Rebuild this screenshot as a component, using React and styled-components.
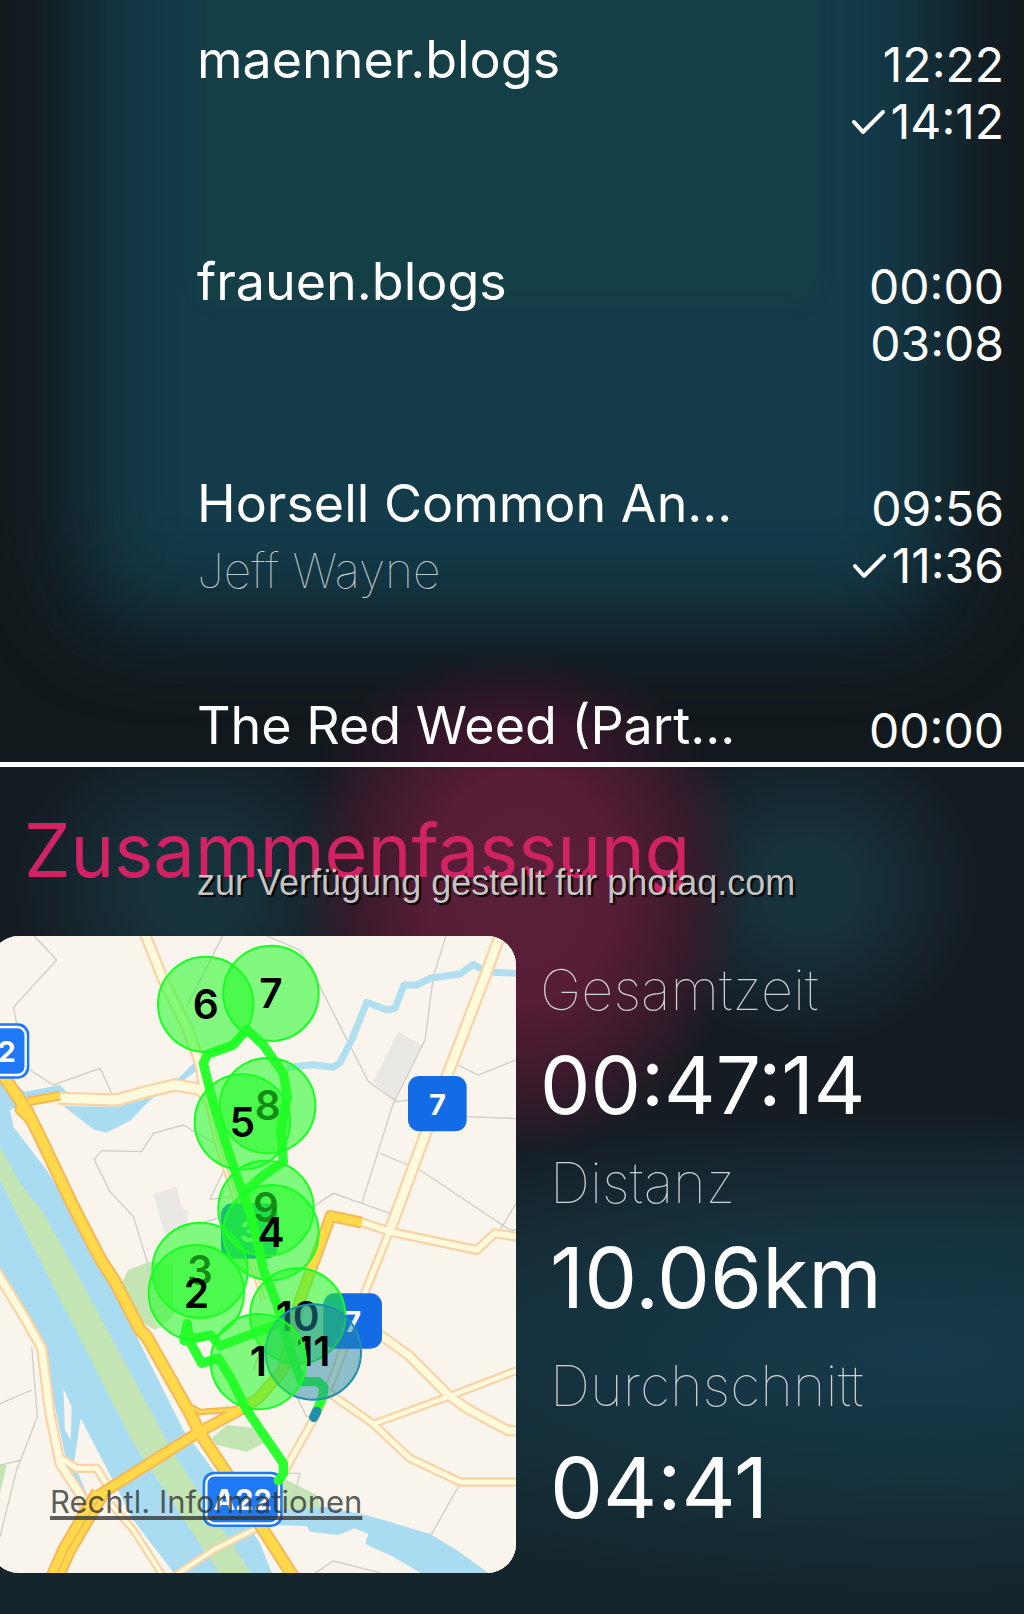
import React from "react";
import styled, { createGlobalStyle } from "styled-components";

const GlobalStyle = createGlobalStyle`
  * { box-sizing: border-box; }
  body {
    margin: 0;
    background: #14232b;
    font-family: Inter, "Liberation Sans", sans-serif;
    color: #fff;
  }
  h1, p, ul, dl, dt, dd, figure { margin: 0; padding: 0; }
`;

/* ---------- Segment list ---------- */

const SegmentsPanel = styled.section`
  position: relative;
  z-index: 0;
  overflow: hidden;
  padding: 28px 20px 3px 197px;
  background: #12191d;
`;

const CoverGlow = styled.div`
  position: absolute;
  z-index: -1;
  inset: -200px 8% 145px 8%;
  border-radius: 60px;
  background: #133b4a;
  filter: blur(46px);
`;

const CoverCore = styled.div`
  position: absolute;
  z-index: -1;
  inset: -40px 20% 60% 19%;
  border-radius: 24px;
  background: #153f46;
  filter: blur(6px);
`;

const CoverFoot = styled.div`
  position: absolute;
  z-index: -1;
  inset: 82% 0 0 0;
  background: radial-gradient(ellipse 190px 110px at 50% 100%, #45152b 0%, #35162a 45%, transparent 100%);
`;

const SegmentList = styled.ul`
  list-style: none;
`;

const Segment = styled.li`
  display: grid;
  grid-template-columns: minmax(0, 1fr) auto;
  column-gap: 20px;

  &:not(:last-child) { min-height: 222px; }
`;

const SegmentTitle = styled.p`
  font-size: 52px;
  line-height: 64px;
  white-space: nowrap;
`;

const SegmentArtist = styled.p`
  font-size: 48px;
  font-weight: 100;
  line-height: 70px;
  color: #c0c9cc;
`;

const Times = styled.div`
  display: flex;
  flex-direction: column;
  align-items: flex-end;
  padding-top: 8px;
`;

const Time = styled.time`
  display: flex;
  align-items: center;
  gap: 4px;
  font-size: 48px;
  line-height: 57px;
`;

const CheckIcon = styled.svg`
  width: 36px;
  height: 24px;
  fill: none;
  stroke: currentColor;
  stroke-width: 4;
  stroke-linecap: round;
  stroke-linejoin: round;
`;

/* ---------- Summary ---------- */

const SummaryPanel = styled.section`
  border-top: 5px solid #fff;
  padding: 39px 0 41px;
  background:
    radial-gradient(ellipse 225px 270px at 51% 120px, #5c213a 0%, #571d36 42%, #3d1a2c 70%, transparent 100%),
    radial-gradient(ellipse 170px 160px at 79% 120px, #16343d 0%, #16313a 30%, transparent 100%),
    radial-gradient(ellipse 180px 160px at 19% 120px, #16343d 0%, #16313a 30%, transparent 100%),
    radial-gradient(ellipse 760px 240px at 90% 585px, #163b4c 0%, #15323e 50%, transparent 100%),
    linear-gradient(#161c23 0, #161c23 340px, #15252c 560px, #14262c 100%);
`;

const SummaryHeader = styled.header`
  position: relative;
  height: 130px;
  padding-left: 24px;
`;

const SummaryTitle = styled.h1`
  font-size: 74px;
  font-weight: 400;
  line-height: 88px;
  color: #d12363;
`;

const Credit = styled.p`
  position: absolute;
  left: 197px;
  top: 56px;
  font-family: "Liberation Sans", Arial, sans-serif;
  font-size: 36px;
  line-height: 42px;
  white-space: nowrap;
  color: #c4c4c4;
  text-shadow: 1px 1px 0 #000, 2px 2px 1px #000;
`;

const SummaryBody = styled.div`
  display: grid;
  grid-template-columns: minmax(0, 516fr) minmax(0, 508fr);
`;

const MapCard = styled.figure`
  position: relative;
  margin-left: -10px;
  border-radius: 29px;
  overflow: hidden;
  background: #f9f5ed;
`;

const MapDrawing = styled.svg`
  display: block;
  width: 100%;
  height: auto;
  font-family: Inter, "Liberation Sans", sans-serif;
`;

const LegalLink = styled.a`
  position: absolute;
  left: 60px;
  bottom: 52px;
  font-size: 31px;
  font-weight: 400;
  line-height: 38px;
  white-space: nowrap;
  color: rgba(50, 50, 50, 0.78);
  text-decoration: underline 4px;
  text-underline-offset: 3px;
  text-decoration-skip-ink: none;
`;

const Stats = styled.dl`
  display: flex;
  flex-direction: column;
  gap: 16px;
  padding: 20px 0 0 24px;
`;

const Stat = styled.div`
  display: grid;
  gap: ${(p) => (p.$loose ? 20 : 13)}px;
  padding-top: ${(p) => (p.$loose ? 10 : 0)}px;
  padding-left: ${(p) => (p.$indent ? 10 : 0)}px;
`;

const StatLabel = styled.dt`
  font-size: 56px;
  font-weight: 100;
  line-height: 68px;
  color: #cdd1d3;
`;

const StatValue = styled.dd`
  font-size: ${(p) => (p.$large ? 84 : 80)}px;
  line-height: 96px;
`;

/* ---------- Map parts ---------- */

const Water = styled.path`fill: #a9dcf0;`;
const Stream = styled.path`fill: none; stroke: #b0dff0; stroke-width: 21; stroke-linejoin: round;`;
const Park = styled.path`fill: #c3e5b3;`;
const Plot = styled.path`fill: #e9e8e5;`;
const Border = styled.path`fill: none; stroke: #d0cdc8; stroke-width: 4;`;
const Road = styled.path`
  fill: none;
  stroke-linejoin: round;
  stroke: ${(p) => p.$c};
  stroke-width: ${(p) => p.$w};
`;
const Route = styled.path`
  fill: none;
  stroke: #2bff2f;
  stroke-width: 28;
  stroke-linecap: round;
  stroke-linejoin: round;
`;
const PinDisc = styled.circle`
  fill: ${(p) => (p.$end ? "rgba(36,136,168,.5)" : "rgba(36,252,40,.56)")};
  stroke: ${(p) => (p.$end ? "#1f8fae" : "#16ff22")};
  stroke-width: 6;
`;
const PinText = styled.text`
  font-size: 122px;
  font-weight: 600;
  text-anchor: middle;
  fill: #000;
`;
const ShieldText = styled.text`
  font-size: 87px;
  font-weight: 700;
  text-anchor: middle;
  fill: #fff;
`;

const whiteRoads = [
  [36, "M430 0L490 150L560 290L600 400L612 470"],
  [18, "M612 470L650 640L700 790L730 920L790 1110"],
  [40, "M175 505L350 510L440 485L525 465L600 478L630 510"],
  [38, "M1502 10L1455 140L1340 440L1170 900"],
  [28, "M1170 900L1090 1100L1000 1340L945 1460L850 1630"],
  [30, "M1080 875L1170 905L1430 960L1485 910L1560 922"],
  [34, "M1120 1200L1225 1275L1345 1395L1400 1435L1525 1502L1560 1502"],
  [26, "M1560 1318L1345 1400L1120 1482"],
  [28, "M960 1370L1120 1482L1230 1585L1380 1656L1560 1656"],
  [34, "M-20 1010L75 1165L125 1255L150 1450L180 1600L245 1700L260 1760"],
  [28, "M185 1585L230 1615L290 1615L325 1670"],
  [24, "M330 1720L400 1800L490 1940"],
  [24, "M520 1940L640 1860L790 1785"],
];

const yellowRoads = [
  [30, "M180 497L85 514"],
  [24, "M60 505L55 540L105 590"],
  [40, "M5 430L80 540L120 620L220 830L300 985L345 1055L420 1200L440 1220L570 1450L600 1510L700 1660L880 1940"],
  [56, "M165 1940L200 1860L300 1690"],
  [36, "M290 1700L590 1510L720 1440L775 1405L850 1320L900 1110L955 960L992 858L1085 878"],
  [20, "M570 1430L600 1446L740 1436"],
];

const borders =
  "M95 10L170 90L40 232L50 280M90 420L160 465L300 415L335 490M672 10L560 230" +
  "M645 640L550 585L460 610L425 665L305 662L282 688L330 785L400 860L440 990L455 1060" +
  "M672 720L630 808L700 800M600 880L670 860M800 18L900 60L960 170L1105 455L1190 515L1225 510" +
  "M1340 10L1300 140L1275 330L1180 520L1085 820M1375 405L1435 435L1560 385M1400 560L1560 566" +
  "M1140 670L1260 720L1530 900L1560 900M1500 900L1560 800M940 830L1000 790L1170 850" +
  "M95 1250L112 1460L50 1620L0 1820M-20 1430L95 1380M-20 1610L65 1590" +
  "M1378 1665L1290 1820M890 1400L920 1460L950 1455M840 1630L900 1630L885 1690" +
  "M930 1940L1000 1893L1140 1928M760 1320L780 1260";

const routes = [
  "M740 298L700 345L622 373L610 400L640 520L700 710L750 850L770 920L790 1020L830 1120L850 1190L880 1290L905 1355L955 1355L972 1372L968 1400L945 1455",
  "M740 298L790 345L850 430L862 500L842 600L850 695L785 740L735 785",
  "M845 1178L660 1248L632 1215L552 1232L562 1180",
  "M562 1190L572 1240L605 1300L655 1285L690 1340L740 1440L850 1600L850 1630L835 1652",
];

const pins = [
  { n: 6, x: 617, y: 223, ty: 268 },
  { n: 7, x: 813, y: 190, ty: 234 },
  { n: 8, x: 803, y: 527, ty: 571 },
  { n: 5, x: 727, y: 576, ty: 620 },
  { n: 9, x: 798, y: 835, ty: 876 },
  { n: 4, x: 813, y: 908, ty: 952 },
  { n: 3, x: 600, y: 1021, ty: 1064 },
  { n: 2, x: 589, y: 1088, ty: 1133 },
  { n: 10, x: 893, y: 1158, ty: 1203 },
  { n: 11, x: 940, y: 1266, ty: 1308, end: true },
  { n: 1, x: 775, y: 1295, ty: 1339 },
];

function Shield({ x, y, w, label, ringed }) {
  return (
    <g>
      <rect x={x} y={y} width={w} height="166" rx="34" fill={ringed ? "#1f78f5" : "#136ce6"} />
      {ringed && (
        <rect x={x + 11} y={y + 11} width={w - 22} height="144" rx="25" fill="none" stroke="#fff" strokeWidth="7" />
      )}
      <ShieldText x={x + w / 2} y={y + 116}>{label}</ShieldText>
    </g>
  );
}

function RunMap() {
  return (
    <MapDrawing viewBox="-30 18 1578 1911" role="img" aria-label="Laufstrecke">
      <rect x="-30" y="18" width="1578" height="1911" fill="#f9f5ed" />
      <Park d="M365 1060L385 1020L450 995L520 1000L520 1160L465 1200L430 1180Z" />
      <Park d="M635 1525L680 1485L780 1495L810 1530L740 1565L650 1545Z" />
      <Park d="M850 1645L950 1695L970 1750L840 1750Z" />
      <Park d="M-30 1605L20 1605L0 1690L-30 1720Z" />
      <Plot d="M460 792L530 770L545 835L565 840L560 900L495 915Z" />
      <Plot d="M1195 305L1265 345L1180 510L1120 455Z" />
      <Water d="M-30 400L20 440L75 485L180 465L205 492L80 520L30 540L40 590L140 720L200 820L270 960L345 1090L420 1240L550 1500L640 1620L780 1840L820 1940L530 1940L400 1770L242 1465L222 1600L272 1720L255 1720L200 1600L130 1260L-30 1010Z" />
      <path d="M190 1375L215 1430L212 1530L195 1500Z M244 1470L330 1645L285 1605L230 1590Z" fill="#f9f5ed" />
      <Water d="M190 528L280 598L320 608L390 572L460 500L350 530Z" />
      <Water d="M440 490L540 440L590 390L645 372L600 415L545 455L440 515Z" />
      <Water d="M780 1745L980 1730L1110 1758L1210 1788L1290 1812L1370 1860L1480 1940L1280 1940L1180 1880L1096 1842L1105 1812L1065 1795L1015 1815L930 1805L920 1788L840 1786Z" />
      <Park d="M-30 600L0 650L60 760L130 850L195 965L300 1160L520 1570L760 1940L665 1940L520 1720L400 1540L105 960L0 750L-30 690Z" />
      <Border d={borders} />
      <Stream d="M860 412L940 404L1000 412L1020 398L1055 330L1100 217L1160 240L1185 235L1212 165L1250 165L1290 145L1380 132L1420 103L1460 126L1560 130" />
      {whiteRoads.map(([w, d]) => <Road key={d} d={d} $w={w} $c="#f9d3a6" />)}
      {whiteRoads.map(([w, d]) => <Road key={d} d={d} $w={w - 13} $c="#fffadb" />)}
      {yellowRoads.map(([w, d]) => <Road key={d} d={d} $w={w} $c="#f6b65a" />)}
      {yellowRoads.map(([w, d]) => <Road key={d} d={d} $w={w - 12} $c="#ffd94a" />)}
      <Road d="M168 1940L203 1860L300 1700" $w={5} $c="#f6b65a" />
      <Shield x={-60} y={280} w={148} label="" ringed />
      <ShieldText x={20} y={396}>2</ShieldText>
      <Shield x={1224} y={438} w={176} label="7" />
      <Shield x={970} y={1090} w={176} label="7" />
      <Shield x={663} y={820} w={170} label="3" />
      <Shield x={608} y={1625} w={240} label="A22" ringed />
      {routes.map((d) => <Route key={d} d={d} />)}
      <path d="M950 1444L941 1462" stroke="#1f8fae" strokeWidth="28" strokeLinecap="round" />
      {pins.map((p) => (
        <g key={p.n}>
          <PinDisc cx={p.x} cy={p.y} r="143" $end={p.end} />
          <PinText x={p.x} y={p.ty}>{p.n}</PinText>
        </g>
      ))}
    </MapDrawing>
  );
}

/* ---------- Page ---------- */

const segments = [
  { title: "maenner.blogs", times: [{ t: "12:22" }, { t: "14:12", done: true }] },
  { title: "frauen.blogs", times: [{ t: "00:00" }, { t: "03:08" }] },
  { title: "Horsell Common An...", artist: "Jeff Wayne", times: [{ t: "09:56" }, { t: "11:36", done: true }] },
  { title: "The Red Weed (Part...", times: [{ t: "00:00" }] },
];

export default function App() {
  return (
    <main>
      <GlobalStyle />
      <SegmentsPanel>
        <CoverGlow />
        <CoverCore />
        <CoverFoot />
        <SegmentList>
          {segments.map((s) => (
            <Segment key={s.title}>
              <div>
                <SegmentTitle>{s.title}</SegmentTitle>
                {s.artist && <SegmentArtist>{s.artist}</SegmentArtist>}
              </div>
              <Times>
                {s.times.map(({ t, done }) => (
                  <Time key={t}>
                    {done && (
                      <CheckIcon viewBox="0 0 36 24" aria-hidden="true">
                        <path d="M3 12L12 22L32 2" />
                      </CheckIcon>
                    )}
                    {t}
                  </Time>
                ))}
              </Times>
            </Segment>
          ))}
        </SegmentList>
      </SegmentsPanel>
      <SummaryPanel>
        <SummaryHeader>
          <SummaryTitle>Zusammenfassung</SummaryTitle>
          <Credit>zur Verfügung gestellt für photaq.com</Credit>
        </SummaryHeader>
        <SummaryBody>
          <MapCard>
            <RunMap />
            <LegalLink href="#legal">Rechtl. Informationen</LegalLink>
          </MapCard>
          <Stats>
            <Stat>
              <StatLabel>Gesamtzeit</StatLabel>
              <StatValue>00:47:14</StatValue>
            </Stat>
            <Stat $indent>
              <StatLabel>Distanz</StatLabel>
              <StatValue $large>10.06km</StatValue>
            </Stat>
            <Stat $indent $loose>
              <StatLabel>Durchschnitt</StatLabel>
              <StatValue $large>04:41</StatValue>
            </Stat>
          </Stats>
        </SummaryBody>
      </SummaryPanel>
    </main>
  );
}
